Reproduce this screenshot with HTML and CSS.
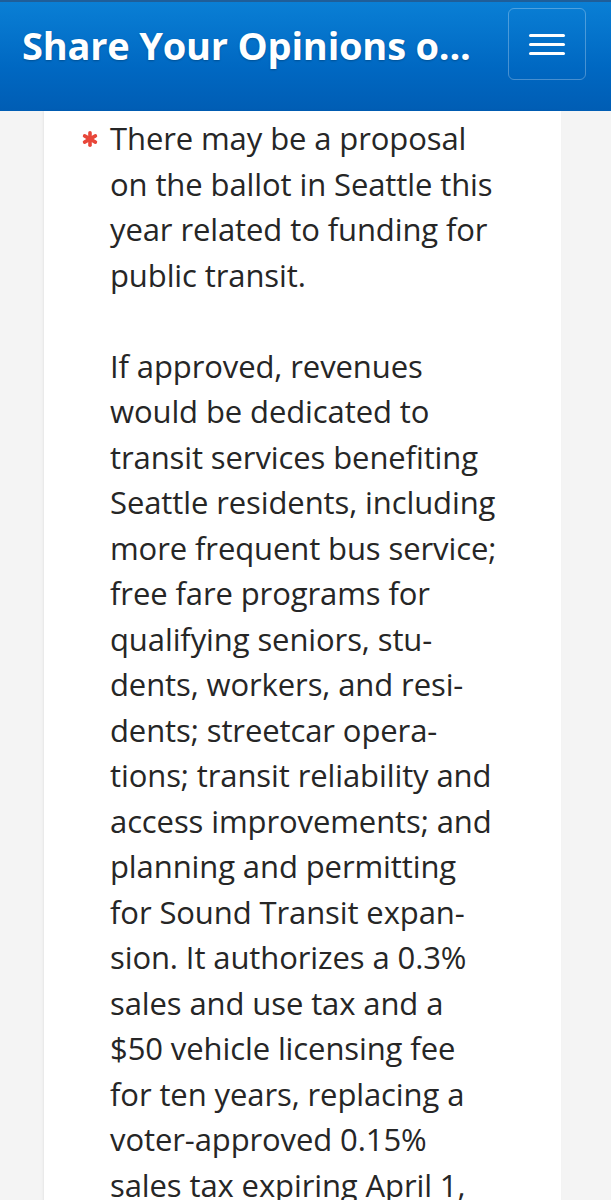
FILE: index.html
```html
<!DOCTYPE html>
<html lang="en">
<head>
<meta charset="utf-8">
<title>Share Your Opinions</title>
<link rel="stylesheet" href="styles.css">
</head>
<body>
<header class="topbar">
  <h1 class="title">Share Your Opinions o...</h1>
  <button class="menu-btn" aria-label="Menu">
    <span class="bar"></span><span class="bar"></span><span class="bar"></span>
  </button>
</header>
<main class="page">
  <section class="card">
    <div class="question">
      <span class="req" aria-label="required">
        <svg viewBox="0 0 16 16" width="16" height="16">
          <g stroke="#e8473a" stroke-width="3.6" stroke-linecap="round">
            <line x1="8" y1="1.8" x2="8" y2="14.2"/>
            <line x1="2.6" y1="4.9" x2="13.4" y2="11.1"/>
            <line x1="2.6" y1="11.1" x2="13.4" y2="4.9"/>
          </g>
        </svg>
      </span>
      <p class="qtext">There may be a proposal<br>on the ballot in Seattle this<br>year related to funding for<br>public transit.<br><br>If approved, revenues<br>would be dedicated to<br>transit services benefiting<br>Seattle residents, including<br>more frequent bus service;<br>free fare programs for<br>qualifying seniors, stu-<br>dents, workers, and resi-<br>dents; streetcar opera-<br>tions; transit reliability and<br>access improvements; and<br>planning and permitting<br>for Sound Transit expan-<br>sion. It authorizes a 0.3%<br>sales and use tax and a<br>$50 vehicle licensing fee<br>for ten years, replacing a<br>voter-approved 0.15%<br>sales tax expiring April 1,</p>
    </div>
  </section>
</main>
</body>
</html>
```
FILE: styles.css
```css
html, body {
  margin: 0;
  padding: 0;
  background: #f4f4f4;
  font-family: "Open Sans", "Noto Sans", sans-serif;
}
.topbar {
  height: 111px;
  box-sizing: border-box;
  background: linear-gradient(to bottom, #0a7fd5 0%, #0068c2 60%, #005db4 100%);
  border-top: 2px solid #1f5e99;
  display: flex;
  align-items: flex-start;
  justify-content: space-between;
  padding: 6px 25px 0 22px;
}
.title {
  margin: 0;
  padding-top: 15px;
  color: #fff;
  font-size: 38px;
  font-weight: 700;
  line-height: 44px;
  letter-spacing: -0.2px;
  text-shadow: 0 1px 2px rgba(0,0,0,0.25);
  white-space: nowrap;
}
.menu-btn {
  width: 78px;
  height: 72px;
  border: 1px solid rgba(255,255,255,0.28);
  border-radius: 6px;
  background: transparent;
  display: flex;
  flex-direction: column;
  align-items: center;
  justify-content: center;
  gap: 6px;
  padding: 0;
}
.bar {
  display: block;
  width: 36px;
  height: 3px;
  background: #fff;
  border-radius: 2px;
}
.page {
  padding: 0 50px 0 44px;
}
.card {
  background: #fff;
  box-shadow: -1px 0 2px rgba(0,0,0,0.06);
  padding: 5px 20px 40px 38px;
}
.question {
  display: flex;
  align-items: flex-start;
  gap: 12px;
}
.req {
  flex: none;
  width: 16px;
  height: 45.5px;
  display: flex;
  align-items: center;
}
.req svg {
  display: block;
}
.qtext {
  margin: 0;
  color: #262626;
  font-size: 31px;
  line-height: 45.5px;
  letter-spacing: -0.1px;
  white-space: nowrap;
}
```
